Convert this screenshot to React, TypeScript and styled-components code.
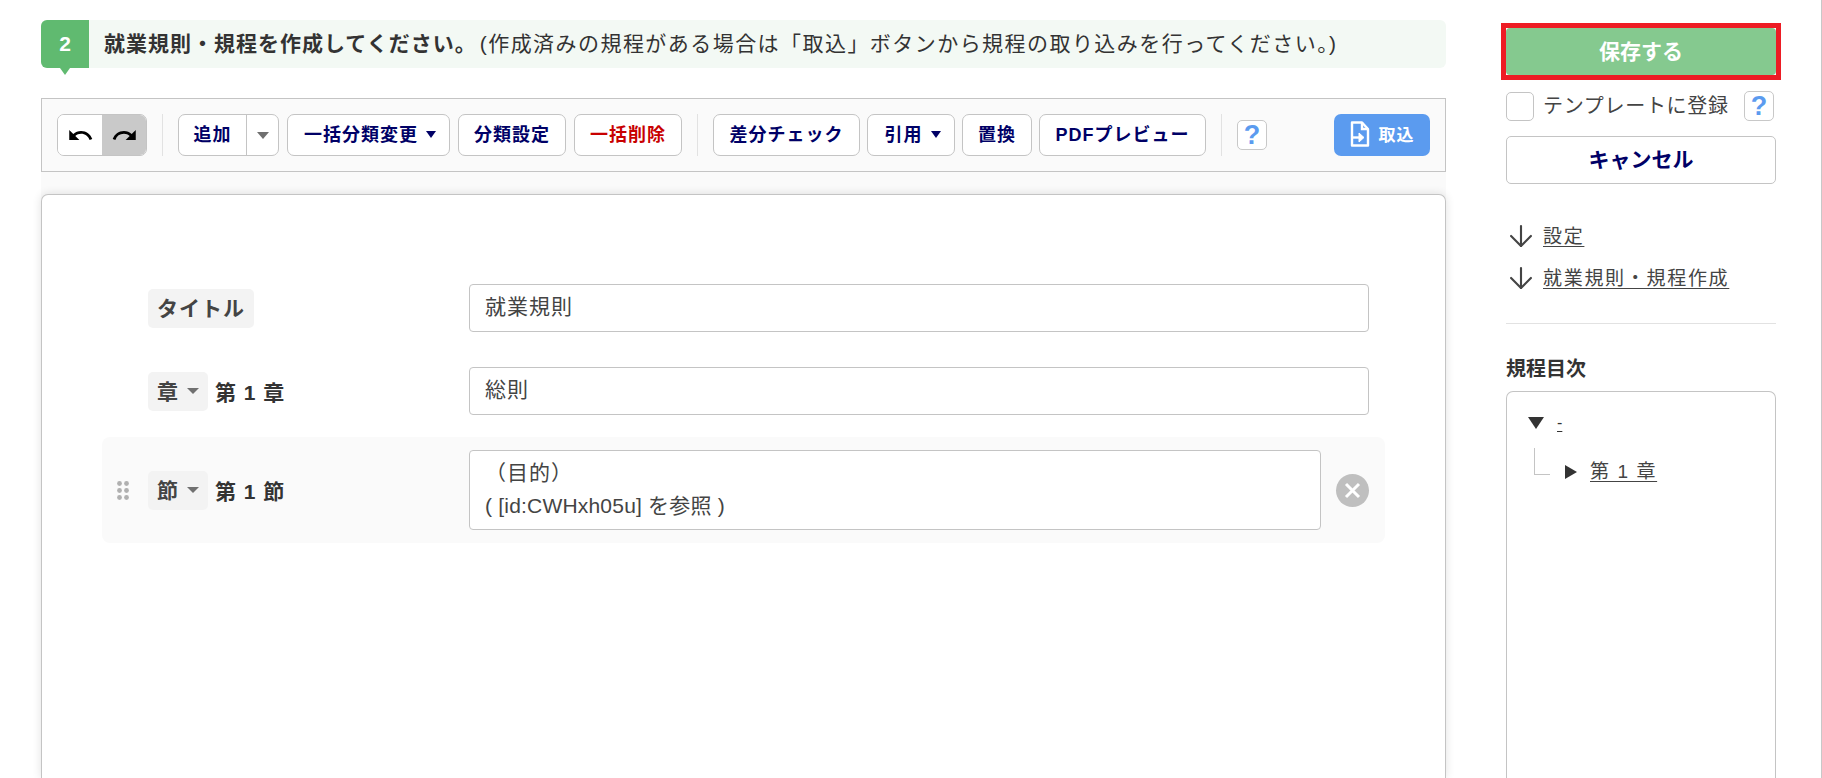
import { createGlobalStyle, styled } from "styled-components";
import { ArrowDown } from "lucide-react";
import { MdRedo, MdUndo } from "react-icons/md";

const GlobalStyle = createGlobalStyle`
  html, body {
    margin: 0;
    padding: 0;
    background: #fff;
    color: #333;
    font-family: "Liberation Sans", "Noto Sans CJK JP", sans-serif;
  }
`;

const Page = styled.div`
  display: flex;
  box-sizing: border-box;
  width: 1822px;
  height: 778px;
  padding: 20px 0 0 41px;
  overflow: hidden;
  border-right: 1px solid #c8c8c8;
`;

const Main = styled.main`
  flex: none;
  display: flex;
  flex-direction: column;
  width: 1405px;
`;

const StepHeader = styled.div`
  flex: none;
  display: flex;
  align-items: center;
  height: 48px;
  background: #f3f9f4;
  border-radius: 6px;
`;

const StepNumber = styled.div`
  position: relative;
  flex: none;
  display: flex;
  align-items: center;
  justify-content: center;
  width: 48px;
  height: 48px;
  margin-right: 15px;
  background: #60ba70;
  border-radius: 6px 0 0 6px;
  color: #fff;
  font-size: 21px;
  font-weight: 700;

  &::after {
    content: "";
    position: absolute;
    left: 19px;
    bottom: -7px;
    border-style: solid;
    border-width: 7px 5px 0;
    border-color: #60ba70 transparent transparent;
  }
`;

const StepTitle = styled.strong`
  padding-bottom: 4px;
  font-size: 21px;
  font-weight: 700;
  letter-spacing: 1px;
  white-space: nowrap;
`;

const StepNote = styled.span`
  margin-left: 3px;
  padding-bottom: 4px;
  font-size: 21px;
  letter-spacing: 1.45px;
  white-space: nowrap;
`;

const Toolbar = styled.div`
  flex: none;
  display: flex;
  align-items: center;
  box-sizing: border-box;
  height: 74px;
  margin-top: 30px;
  padding: 0 15px;
  background: #fafafa;
  border: 1px solid #c4c4c4;
`;

const ToolGroup = styled.div<{ $gap: number }>`
  display: flex;
  gap: ${({ $gap }) => $gap}px;
`;

const ToolDivider = styled.div`
  flex: none;
  width: 1px;
  height: 42px;
  margin: 0 15px;
  background: #e2e2e2;
`;

const HistoryGroup = styled.div`
  display: flex;
  box-sizing: border-box;
  width: 90px;
  height: 42px;
  overflow: hidden;
  background: #fff;
  border: 1px solid #c4c4c4;
  border-radius: 7px;
`;

const HistoryButton = styled.button<{ $active?: boolean }>`
  display: flex;
  align-items: center;
  justify-content: center;
  flex: 1;
  padding: 0;
  background: ${({ $active }) => ($active ? "#c9c9c9" : "#fff")};
  border: 0;
  color: #000;
  font-size: 27px;
`;

const ToolButton = styled.button<{ $danger?: boolean; $caret?: boolean; $width: number }>`
  display: flex;
  align-items: center;
  justify-content: center;
  gap: 8px;
  box-sizing: border-box;
  width: ${({ $width }) => $width}px;
  height: 42px;
  padding: 0 0 4px ${({ $caret }) => ($caret ? "3px" : "0")};
  background: #fff;
  border: 1px solid #c4c4c4;
  border-radius: 7px;
  color: ${({ $danger }) => ($danger ? "#c80000" : "#000066")};
  font-family: inherit;
  font-size: 18px;
  font-weight: 700;
  letter-spacing: 1px;
  white-space: nowrap;
`;

const SplitButton = styled.div`
  display: flex;
  box-sizing: border-box;
  width: 101px;
  height: 42px;
  background: #fff;
  border: 1px solid #c4c4c4;
  border-radius: 7px;
`;

const SplitLabel = styled.span`
  display: flex;
  align-items: center;
  justify-content: center;
  width: 68px;
  padding-bottom: 4px;
  box-sizing: border-box;
  border-right: 1px solid #c4c4c4;
  color: #000066;
  font-size: 18px;
  font-weight: 700;
  letter-spacing: 1px;
`;

const SplitCaret = styled.span`
  display: flex;
  flex: 1;
  align-items: center;
  justify-content: center;
`;

const Caret = styled.i<{ $color: string; $half?: number; $height?: number }>`
  display: block;
  flex: none;
  border-style: solid;
  border-width: ${({ $half = 6, $height = 6 }) => `${$height}px ${$half}px 0`};
  border-color: ${({ $color }) => $color} transparent transparent;
`;

const ToolCaret = styled(Caret)`
  margin-top: 3px;
`;

const HelpButton = styled.span`
  display: flex;
  flex: none;
  align-items: center;
  justify-content: center;
  box-sizing: border-box;
  width: 30px;
  height: 30px;
  background: #fff;
  border: 1px solid #c8c8c8;
  border-radius: 5px;
  color: #5b9bef;
  font-size: 27px;
  font-weight: 700;
  letter-spacing: 0;
`;

const ImportButton = styled.button`
  display: flex;
  align-items: center;
  justify-content: center;
  gap: 9px;
  box-sizing: border-box;
  width: 96px;
  height: 42px;
  margin-left: auto;
  padding: 0 0 3px;
  background: #5b9bef;
  border: 0;
  border-radius: 7px;
  color: #fff;
  font-family: inherit;
  font-size: 17px;
  font-weight: 700;
  letter-spacing: 1px;
`;

const EditorShell = styled.div`
  flex: 1;
  padding-top: 22px;
  background: #fafafa;
`;

const EditorCard = styled.div`
  box-sizing: border-box;
  height: 100%;
  padding: 89px 60px 0;
  background: #fff;
  border: 1px solid #c4c4c4;
  border-bottom: 0;
  border-radius: 7px 7px 0 0;
  box-shadow: 0 0 10px rgba(0, 0, 0, 0.12);
`;

const Row = styled.div<{ $section?: boolean; $gapBelow?: number }>`
  display: flex;
  align-items: center;
  margin-bottom: ${({ $gapBelow = 0 }) => $gapBelow}px;
  padding: ${({ $section }) => ($section ? "13px 16px 13px 15px" : "0 16px 0 46px")};
  background: ${({ $section }) => ($section ? "#fafafa" : "transparent")};
  border-radius: 8px;
`;

const Grip = styled.svg`
  flex: none;
  width: 12px;
  height: 19px;
  margin-right: 19px;
  fill: #b0b0b0;
`;

const RowLabel = styled.div`
  flex: none;
  display: flex;
  align-items: center;
  gap: 7px;
  width: 321px;
  font-size: 21px;
  font-weight: 700;
  letter-spacing: 1px;
`;

const Tag = styled.span`
  display: flex;
  align-items: center;
  gap: 8px;
  box-sizing: border-box;
  height: 39px;
  padding: 0 9px 3px;
  background: #f3f3f3;
  border-radius: 5px;
  color: #444;

  i {
    margin-top: 3px;
  }
`;

const Field = styled.div`
  flex: 1;
  box-sizing: border-box;
  min-height: 48px;
  padding: 5px 15px 7px;
  background: #fff;
  border: 1px solid #c4c4c4;
  border-radius: 4px;
  color: #444;
  font-size: 21px;
  letter-spacing: 1px;
  line-height: 34px;
`;

const FieldBlock = styled(Field)`
  padding: 5px 15px 7px;
  line-height: 33px;
`;

const ReferenceLine = styled.div`
  letter-spacing: 0.2px;
`;

const RemoveButton = styled.span`
  flex: none;
  display: flex;
  align-items: center;
  justify-content: center;
  width: 33px;
  height: 33px;
  margin-left: 15px;
  background: #bfbfbf;
  border-radius: 50%;
`;

const Side = styled.aside`
  flex: none;
  display: flex;
  flex-direction: column;
  width: 270px;
  margin: 3px 0 0 60px;
`;

const SaveFrame = styled.div`
  flex: none;
  display: flex;
  margin: 0 -5px;
  border: 5px solid #ed1c24;
`;

const SaveButton = styled.button`
  flex: 1;
  height: 47px;
  padding: 0 0 4px;
  background: #85c98f;
  border: 0;
  border-radius: 4px;
  color: #fff;
  font-family: inherit;
  font-size: 21px;
  font-weight: 700;
`;

const TemplateRow = styled.label`
  display: flex;
  align-items: center;
  height: 30px;
  margin-top: 11px;
  color: #444;
  font-size: 20px;
  letter-spacing: 0.7px;
  white-space: nowrap;
`;

const TemplateText = styled.span`
  padding-bottom: 3px;
`;

const CheckBox = styled.span`
  flex: none;
  box-sizing: border-box;
  width: 28px;
  height: 29px;
  margin-right: 9px;
  background: #fff;
  border: 1px solid #c4c4c4;
  border-radius: 5px;
`;

const TemplateHelp = styled(HelpButton)`
  margin-left: auto;
  margin-right: 2px;
`;

const CancelButton = styled.button`
  flex: none;
  height: 48px;
  margin-top: 15px;
  padding: 0 0 5px;
  background: #fff;
  border: 1px solid #c4c4c4;
  border-radius: 5px;
  color: #000066;
  font-family: inherit;
  font-size: 21px;
  font-weight: 700;
`;

const JumpList = styled.nav`
  display: flex;
  flex-direction: column;
  gap: 22px;
  margin-top: 42px;
  padding: 0 0 35px 5px;
  border-bottom: 1px solid #e2e2e2;
`;

const JumpLink = styled.a`
  display: flex;
  align-items: center;
  gap: 12px;
  height: 20px;
  color: #444;
  font-size: 19px;
  letter-spacing: 1.7px;

  svg {
    flex: none;
    margin: -7px;
  }

  span {
    padding-bottom: 3px;
    text-decoration: underline;
    text-underline-offset: 3px;
  }
`;

const TocHeading = styled.h2`
  margin: 34px 0 11px;
  color: #333;
  font-size: 20px;
  font-weight: 700;
  line-height: 22px;
`;

const TocBox = styled.div`
  flex: 1;
  padding: 24px 21px;
  background: #fff;
  border: 1px solid #c4c4c4;
  border-bottom: 0;
  border-radius: 7px 7px 0 0;
`;

const TocRow = styled.div`
  display: flex;
  align-items: center;
  height: 14px;
  color: #333;
`;

const TocChild = styled.div`
  display: flex;
  align-items: flex-end;
  margin: 18px 0 0 6px;
`;

const TocElbow = styled.span`
  flex: none;
  width: 15px;
  height: 26px;
  margin-right: 15px;
  border-left: 1px solid #c4c4c4;
  border-bottom: 1px solid #c4c4c4;
`;

const TocRight = styled.i`
  flex: none;
  margin-right: 13px;
  margin-bottom: -4px;
  border-style: solid;
  border-width: 7px 0 7px 12px;
  border-color: transparent transparent transparent #333;
`;

const TocLink = styled.a`
  margin-bottom: -7px;
  color: #444;
  font-size: 19px;
  letter-spacing: 1.6px;
  line-height: 20px;
  text-decoration: underline;
  text-underline-offset: 3px;
  white-space: pre;
`;

const TocRootLink = styled.a`
  margin-left: 13px;
  font-size: 16px;
  text-decoration: underline;
  text-underline-offset: 3px;
`;

const toolsLeft = [
  { label: "一括分類変更", width: 163, caret: true },
  { label: "分類設定", width: 108 },
  { label: "一括削除", width: 108, danger: true },
];

const toolsRight = [
  { label: "差分チェック", width: 147 },
  { label: "引用", width: 88, caret: true },
  { label: "置換", width: 70 },
  { label: "PDFプレビュー", width: 167 },
];

function ImportIcon() {
  return (
    <svg width="20" height="26" viewBox="0 0 20 26" fill="none" stroke="#fff" strokeWidth="2.4">
      <path d="M2 1.5h10l6 6.5v16.5H2z" strokeLinejoin="round" />
      <path d="M12 1.5V8h6" />
      <path d="M2 16.5h10" />
      <path d="M9 12l5 4.5-5 4.5z" fill="#fff" strokeWidth="1" />
    </svg>
  );
}

function DragHandle() {
  const dots = [2.5, 9.5, 16.5].flatMap((cy) => [
    <circle key={`l${cy}`} cx="2.5" cy={cy} r="2.4" />,
    <circle key={`r${cy}`} cx="9.5" cy={cy} r="2.4" />,
  ]);
  return <Grip viewBox="0 0 12 19">{dots}</Grip>;
}

export default function App() {
  return (
    <>
      <GlobalStyle />
      <Page>
        <Main>
          <StepHeader>
            <StepNumber>2</StepNumber>
            <StepTitle>就業規則・規程を作成してください。</StepTitle>
            <StepNote>(作成済みの規程がある場合は「取込」ボタンから規程の取り込みを行ってください。)</StepNote>
          </StepHeader>

          <Toolbar>
            <HistoryGroup>
              <HistoryButton>
                <MdUndo />
              </HistoryButton>
              <HistoryButton $active>
                <MdRedo />
              </HistoryButton>
            </HistoryGroup>
            <ToolDivider />
            <ToolGroup $gap={8}>
              <SplitButton>
                <SplitLabel>追加</SplitLabel>
                <SplitCaret>
                  <Caret $color="#707070" $height={7} />
                </SplitCaret>
              </SplitButton>
              {toolsLeft.map((tool) => (
                <ToolButton key={tool.label} $width={tool.width} $danger={tool.danger} $caret={tool.caret}>
                  {tool.label}
                  {tool.caret && <ToolCaret $color="#000066" $half={5.5} $height={7} />}
                </ToolButton>
              ))}
            </ToolGroup>
            <ToolDivider />
            <ToolGroup $gap={7}>
              {toolsRight.map((tool) => (
                <ToolButton key={tool.label} $width={tool.width} $caret={tool.caret}>
                  {tool.label}
                  {tool.caret && <ToolCaret $color="#000066" $half={5.5} $height={7} />}
                </ToolButton>
              ))}
            </ToolGroup>
            <ToolDivider />
            <HelpButton>?</HelpButton>
            <ImportButton>
              <ImportIcon />
              取込
            </ImportButton>
          </Toolbar>

          <EditorShell>
            <EditorCard>
              <Row $gapBelow={35}>
                <RowLabel>
                  <Tag>タイトル</Tag>
                </RowLabel>
                <Field>就業規則</Field>
              </Row>
              <Row $gapBelow={22}>
                <RowLabel>
                  <Tag>
                    章<Caret $color="#707070" />
                  </Tag>
                  第 1 章
                </RowLabel>
                <Field>総則</Field>
              </Row>
              <Row $section>
                <DragHandle />
                <RowLabel>
                  <Tag>
                    節<Caret $color="#707070" />
                  </Tag>
                  第 1 節
                </RowLabel>
                <FieldBlock>
                  <div>（目的）</div>
                  <ReferenceLine>( [id:CWHxh05u] を参照 )</ReferenceLine>
                </FieldBlock>
                <RemoveButton>
                  <svg width="17" height="17" viewBox="0 0 17 17" stroke="#fff" strokeWidth="3">
                    <path d="M2 2l13 13M15 2L2 15" />
                  </svg>
                </RemoveButton>
              </Row>
            </EditorCard>
          </EditorShell>
        </Main>

        <Side>
          <SaveFrame>
            <SaveButton>保存する</SaveButton>
          </SaveFrame>
          <TemplateRow>
            <CheckBox />
            <TemplateText>テンプレートに登録</TemplateText>
            <TemplateHelp>?</TemplateHelp>
          </TemplateRow>
          <CancelButton>キャンセル</CancelButton>
          <JumpList>
            <JumpLink>
              <ArrowDown size={34} strokeWidth={1.5} />
              <span>設定</span>
            </JumpLink>
            <JumpLink>
              <ArrowDown size={34} strokeWidth={1.5} />
              <span>就業規則・規程作成</span>
            </JumpLink>
          </JumpList>
          <TocHeading>規程目次</TocHeading>
          <TocBox>
            <TocRow>
              <Caret $color="#333" $half={8} $height={12} />
              <TocRootLink>-</TocRootLink>
            </TocRow>
            <TocChild>
              <TocElbow />
              <TocRight />
              <TocLink>第 1 章</TocLink>
            </TocChild>
          </TocBox>
        </Side>
      </Page>
    </>
  );
}
